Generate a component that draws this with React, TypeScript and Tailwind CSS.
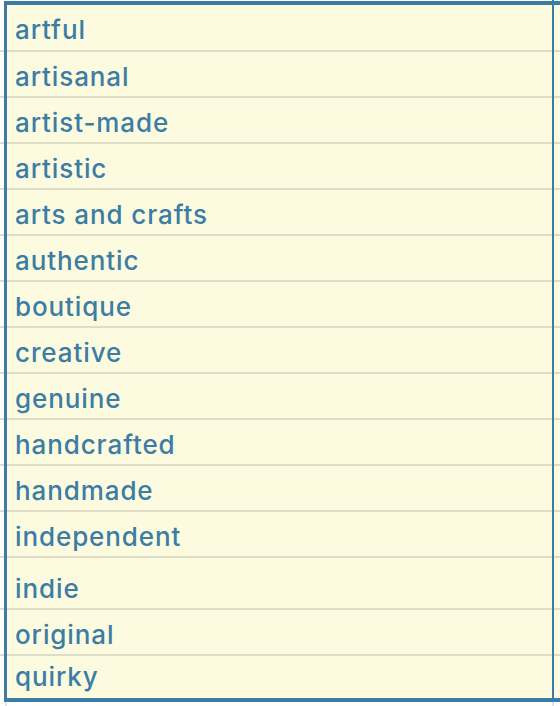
import React from "react";

const words = [
  { text: "artful", h: "h-[47px]" },
  { text: "artisanal", h: "h-[46px]" },
  { text: "artist-made", h: "h-[46px]" },
  { text: "artistic", h: "h-[46px]" },
  { text: "arts and crafts", h: "h-[46px]" },
  { text: "authentic", h: "h-[46px]" },
  { text: "boutique", h: "h-[46px]" },
  { text: "creative", h: "h-[46px]" },
  { text: "genuine", h: "h-[46px]" },
  { text: "handcrafted", h: "h-[46px]" },
  { text: "handmade", h: "h-[46px]" },
  { text: "independent", h: "h-[46px]" },
  { text: "indie", h: "h-[52px]", tall: true },
  { text: "original", h: "h-[46px]" },
  { text: "quirky", h: "h-[42px]", last: true },
];

function Row({ text, h, tall, last }: { text: string; h: string; tall?: boolean; last?: boolean }) {
  const line = last ? "" : "border-b-2";
  const pad = tall ? "pt-[9px]" : last ? "pt-[2px]" : "pt-[3px]";
  return (
    <div className={`flex ${h}`}>
      {/* page grid peeking out on the left */}
      <div className={`w-[4px] bg-white border-[#dcdcdc] ${line}`} />
      <div className="w-[3px] bg-[#3a7ca4]" />
      <div className={`w-[545px] bg-[#fdfbdf] border-[#dfddc6] pl-[8px] ${line} ${pad}`}>
        <span
          className={`block ${last ? "leading-[38px]" : "leading-[44px]"} text-[26px] font-medium tracking-[0.9px] text-[#3b7da5]`}
        >
          {text}
        </span>
      </div>
      <div className="w-[2px] bg-[#3a7ca4]" />
      <div className={`flex-1 bg-[#fdfbdf] border-[#dfddc6] ${line}`} />
    </div>
  );
}

export default function App() {
  return (
    <div
      className="w-[560px] h-[706px] overflow-hidden bg-white"
      style={{ fontFamily: "Inter, 'Noto Sans', sans-serif" }}
    >
      <div className="flex h-[1px]">
        <div className="w-[552px]" />
        <div className="w-[2px] bg-[#3a7ca4]" />
      </div>
      <div className="flex h-[4px]">
        <div className="w-[4px]" />
        <div className="flex-1 bg-[#3a7ca4]" />
      </div>

      {words.map((w) => (
        <Row key={w.text} {...w} />
      ))}

      <div className="flex h-[4px]">
        <div className="w-[4px]" />
        <div className="flex-1 bg-[#3a7ca4]" />
      </div>
      <div className="flex h-[4px]">
        <div className="w-[5px]" />
        <div className="w-[2px] bg-[#e4e4e4]" />
        <div className="w-[545px]" />
        <div className="w-[2px] bg-[#e4e4e4]" />
      </div>
    </div>
  );
}
